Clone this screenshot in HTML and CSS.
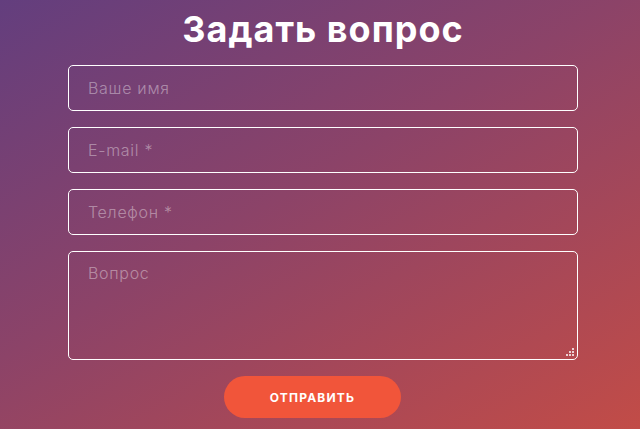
FILE: index.html
```html
<!DOCTYPE html>
<html lang="ru">
<head>
  <meta charset="UTF-8">
  <meta name="viewport" content="width=device-width, initial-scale=1.0">
  <title>Задать вопрос</title>
  <link rel="stylesheet" href="styles.css">
</head>
<body>
  <section class="ask">
    <h2 class="ask-title">Задать вопрос</h2>
    <form class="ask-form">
      <input type="text" class="ask-input" placeholder="Ваше имя">
      <input type="email" class="ask-input" placeholder="E-mail *">
      <input type="tel" class="ask-input" placeholder="Телефон *">
      <div class="ask-area">
        <textarea class="ask-input ask-textarea" placeholder="Вопрос"></textarea>
        <svg class="ask-grip" width="8" height="8" viewBox="0 0 8 8" fill="#fff" opacity="0.75">
          <rect x="6" y="0" width="2" height="2"/>
          <rect x="3" y="3" width="2" height="2"/>
          <rect x="6" y="3" width="2" height="2"/>
          <rect x="0" y="6" width="2" height="2"/>
          <rect x="3" y="6" width="2" height="2"/>
          <rect x="6" y="6" width="2" height="2"/>
        </svg>
      </div>
      <button type="submit" class="ask-button">Отправить</button>
    </form>
  </section>
</body>
</html>
```

FILE: styles.css
```css
* {
  box-sizing: border-box;
}

html, body {
  height: 100%;
}

body {
  margin: 0;
  font-family: "Inter", "Noto Sans", sans-serif;
  background: linear-gradient(150deg, #633e7e 0%, #8c4368 45%, #c24c47 100%);
  color: #fff;
  overflow: hidden;
}

.ask {
  width: 510px;
  margin-left: 68px;
  padding-top: 9px;
}

.ask-title {
  margin: 0 0 16px;
  text-align: center;
  font-size: 36px;
  line-height: 40px;
  font-weight: 700;
  letter-spacing: 1px;
}

.ask-form {
  display: flex;
  flex-direction: column;
  gap: 16px;
}

.ask-input {
  display: block;
  width: 100%;
  height: 46px;
  padding: 0 19px;
  border: 1px solid #fff;
  border-radius: 5px;
  background: transparent;
  color: #fff;
  font-family: "Inter", "Noto Sans", sans-serif;
  font-size: 16px;
  font-weight: 300;
  letter-spacing: 0.7px;
  outline: none;
}

.ask-input::placeholder {
  color: rgba(255, 255, 255, 0.4);
}

.ask-area {
  position: relative;
}

.ask-textarea {
  height: 109px;
  padding-top: 11px;
  resize: none;
}

.ask-grip {
  position: absolute;
  right: 4px;
  bottom: 4px;
}

.ask-button {
  align-self: flex-start;
  width: 177px;
  height: 42px;
  margin-left: 156px;
  border: 0;
  border-radius: 21px;
  background: #f1553a;
  color: #fff;
  font-family: "Inter", "Noto Sans", sans-serif;
  font-size: 12px;
  font-weight: 700;
  letter-spacing: 1.2px;
  text-transform: uppercase;
  cursor: pointer;
}
```
